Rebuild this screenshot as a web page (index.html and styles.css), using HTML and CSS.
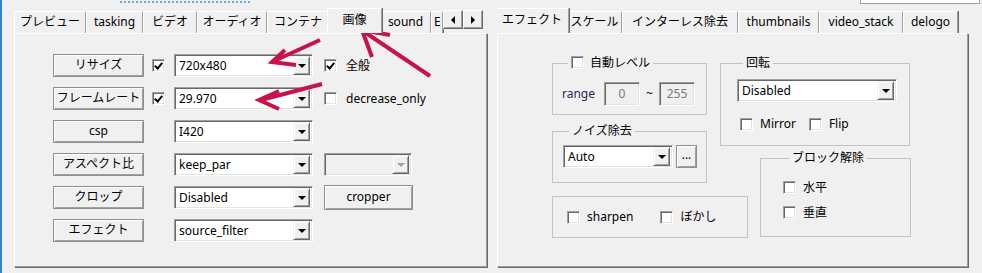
FILE: index.html
```html
<!DOCTYPE html>
<html>
<head>
    <title>画像設定</title>
    <link rel="stylesheet" href="styles.css">
</head>
<body>

<div class="win-edge"></div>
<div class="top-strip"></div>
<div class="top-field"></div>

<div class="screen">
    <div class="tabctl tabctl-left">
        <div class="tabs">
            <span class="tab w-prev">プレビュー</span>
            <span class="tab w-task">tasking</span>
            <span class="tab w-video">ビデオ</span>
            <span class="tab w-audio">オーディオ</span>
            <span class="tab w-cont">コンテナ</span>
            <span class="tab sel w-img">画像</span>
            <span class="tab w-sound">sound</span>
            <span class="tab w-enc">E</span>
            <span class="tab-scroll">
                <span class="scroll-btn"><i class="tri-left"></i></span>
                <span class="scroll-btn"><i class="tri-right"></i></span>
            </span>
        </div>
        <div class="panel panel-left">
            <div class="row">
                <span class="btn">リサイズ</span>
                <span class="chk on"></span>
                <span class="combo"><span class="combo-text">720x480</span><span class="drop"><i class="tri-down"></i></span></span>
                <span class="chk on"></span><span class="chk-label">全般</span>
            </div>
            <div class="row">
                <span class="btn">フレームレート</span>
                <span class="chk on"></span>
                <span class="combo"><span class="combo-text">29.970</span><span class="drop"><i class="tri-down"></i></span></span>
                <span class="chk"></span><span class="chk-label">decrease_only</span>
            </div>
            <div class="row">
                <span class="btn">csp</span>
                <span class="chk-space"></span>
                <span class="combo"><span class="combo-text">I420</span><span class="drop"><i class="tri-down"></i></span></span>
            </div>
            <div class="row">
                <span class="btn">アスペクト比</span>
                <span class="chk-space"></span>
                <span class="combo"><span class="combo-text">keep_par</span><span class="drop"><i class="tri-down"></i></span></span>
                <span class="combo combo-off"><span class="combo-text"></span><span class="drop"><i class="tri-down"></i></span></span>
            </div>
            <div class="row">
                <span class="btn">クロップ</span>
                <span class="chk-space"></span>
                <span class="combo"><span class="combo-text">Disabled</span><span class="drop"><i class="tri-down"></i></span></span>
                <span class="btn btn-crop">cropper</span>
            </div>
            <div class="row">
                <span class="btn">エフェクト</span>
                <span class="chk-space"></span>
                <span class="combo"><span class="combo-text">source_filter</span><span class="drop"><i class="tri-down"></i></span></span>
            </div>
        </div>
    </div>

    <div class="tabctl tabctl-right">
        <div class="tabs">
            <span class="tab sel w-eff">エフェクト</span>
            <span class="tab w-scale">スケール</span>
            <span class="tab w-deint">インターレス除去</span>
            <span class="tab w-thumb">thumbnails</span>
            <span class="tab w-stack">video_stack</span>
            <span class="tab w-delogo">delogo</span>
        </div>
        <div class="panel panel-right">
            <div class="col col-a">
                <fieldset class="group g-level">
                    <legend><span class="chk"></span><span class="chk-label">自動レベル</span></legend>
                    <div class="range-row">
                        <span class="range-label">range</span>
                        <span class="num">0</span>
                        <span class="tilde">~</span>
                        <span class="num">255</span>
                    </div>
                </fieldset>
                <fieldset class="group g-noise">
                    <legend>ノイズ除去</legend>
                    <div class="noise-row">
                        <span class="combo combo-noise"><span class="combo-text">Auto</span><span class="drop"><i class="tri-down"></i></span></span>
                        <span class="btn btn-dots">...</span>
                    </div>
                </fieldset>
                <div class="group g-sharp">
                    <span class="chk"></span><span class="chk-label">sharpen</span>
                    <span class="chk chk-gap"></span><span class="chk-label">ぼかし</span>
                </div>
            </div>
            <div class="col col-b">
                <fieldset class="group g-rot">
                    <legend>回転</legend>
                    <span class="combo combo-rot"><span class="combo-text">Disabled</span><span class="drop"><i class="tri-down"></i></span></span>
                    <div class="rot-row">
                        <span class="chk"></span><span class="chk-label">Mirror</span>
                        <span class="chk chk-flip"></span><span class="chk-label">Flip</span>
                    </div>
                </fieldset>
                <fieldset class="group g-block">
                    <legend>ブロック解除</legend>
                    <div class="block-row"><span class="chk"></span><span class="chk-label">水平</span></div>
                    <div class="block-row"><span class="chk"></span><span class="chk-label">垂直</span></div>
                </fieldset>
            </div>
        </div>
    </div>
</div>

<!-- red annotation arrows drawn over the dialog -->
<svg class="arrows" width="982" height="273" viewBox="0 0 982 273">
    <g fill="none" stroke="#c8124a" stroke-width="4">
        <path d="M320 40 L274 61"/>
        <path d="M285 50 L272 62 L296 65"/>
        <path d="M430 76 L363 31"/>
        <path d="M372 57 L362 30 L390 35"/>
        <path d="M322 84 L261 100"/>
        <path d="M279 91 L259 100 L279 109"/>
    </g>
</svg>

</body>
</html>
```

FILE: styles.css
```css
* {
    box-sizing: border-box;
}
body {
    margin: 0;
    width: 982px;
    height: 273px;
    overflow: hidden;
    position: relative;
    background-color: #f0f0f0;
    font: 12px/16px "Noto Sans", "Noto Sans CJK JP", sans-serif;
    color: #000;
}
.win-edge {
    position: absolute;
    left: 0;
    top: 0;
    width: 2px;
    height: 273px;
    background-color: #2b88d8;
}
.top-strip {
    position: absolute;
    left: 120px;
    top: 0;
    width: 130px;
    height: 3px;
    border-bottom: 2px dotted #6fa8dc;
}
.top-field {
    position: absolute;
    left: 860px;
    top: -2px;
    width: 120px;
    height: 6px;
    background-color: #fff;
    border: 1px solid #a0a0a0;
}
.screen {
    display: flex;
    gap: 10px;
    padding: 8px 0 0 14px;
}

/* tab controls */
.tabctl-left {
    width: 473px;
}
.tabctl-right {
    width: 471px;
}
.tabs {
    display: flex;
    align-items: flex-end;
    height: 25px;
    position: relative;
    overflow: hidden;
}
.tab {
    height: 22px;
    flex: none;
    text-align: center;
    line-height: 20px;
    border-top: 1px solid #fff;
    border-left: 1px solid #fff;
    border-right: 1px solid #a0a0a0;
    box-shadow: 1px 0 0 #696969;
    white-space: nowrap;
    overflow: hidden;
}
.tab.sel {
    height: 26px;
    margin: 0 -2px -1px;
    line-height: 22px;
    position: relative;
    z-index: 1;
    background-color: #f0f0f0;
}
.w-prev { width: 72px; }
.w-task { width: 57px; }
.w-video { width: 54px; }
.w-audio { width: 70px; }
.w-cont { width: 62px; }
.w-img { width: 55px; padding-bottom: 3px; }
.w-sound { width: 51px; }
.w-enc { width: 12px; text-align: left; padding-left: 2px; }
.w-eff { width: 74px; padding-bottom: 3px; }
.w-scale { width: 55px; }
.w-deint { width: 116px; }
.w-thumb { width: 81px; }
.w-stack { width: 84px; }
.w-delogo { width: 55px; }

.tab-scroll {
    position: absolute;
    left: 429px;
    top: 2px;
    display: flex;
    z-index: 2;
}
.scroll-btn {
    width: 20px;
    height: 19px;
    background-color: #f0f0f0;
    border: 1px solid;
    border-color: #fff #696969 #696969 #fff;
    box-shadow: inset -1px -1px 0 #a0a0a0;
    display: flex;
    align-items: center;
    justify-content: center;
}
.tri-left {
    border-style: solid;
    border-width: 4px 4px 4px 0;
    border-color: transparent #000 transparent transparent;
}
.tri-right {
    border-style: solid;
    border-width: 4px 0 4px 4px;
    border-color: transparent transparent transparent #000;
}
.panel {
    height: 234px;
    border: 1px solid;
    border-color: #fff #a0a0a0 #a0a0a0 #fff;
    box-shadow: 1px 1px 0 #696969;
}

/* left panel rows */
.panel-left {
    padding: 20px 0 0 38px;
    display: flex;
    flex-direction: column;
    gap: 10px;
}
.row {
    display: flex;
    align-items: center;
    height: 23px;
}
.btn {
    width: 91px;
    height: 23px;
    flex: none;
    text-align: center;
    line-height: 20px;
    background-color: #f0f0f0;
    border: 1px solid #8f8f8f;
    box-shadow: inset 1px 1px 0 #fff, inset -1px -1px 0 #a0a0a0;
    margin-right: 8px;
}
.btn-crop {
    width: 89px;
    height: 25px;
    margin-left: 11px;
    line-height: 22px;
}
.chk {
    width: 13px;
    height: 13px;
    flex: none;
    display: inline-block;
    background-color: #fff;
    border: 1px solid;
    border-color: #a0a0a0 #fff #fff #a0a0a0;
    box-shadow: inset 1px 1px 0 #696969, inset -1px -1px 0 #e3e3e3;
    position: relative;
    vertical-align: middle;
}
.chk.on::after {
    content: "";
    position: absolute;
    left: 3px;
    top: 1px;
    width: 3px;
    height: 6px;
    border: solid #000;
    border-width: 0 2px 2px 0;
    transform: rotate(40deg);
}
.chk-space {
    width: 13px;
    flex: none;
    margin-right: 9px;
}
.row .chk {
    margin-right: 9px;
}
.row .combo + .chk {
    margin-left: 11px;
    margin-right: 9px;
}
.chk-label {
    white-space: nowrap;
}
.combo {
    width: 139px;
    height: 23px;
    flex: none;
    display: flex;
    align-items: center;
    background-color: #fff;
    border: 1px solid;
    border-color: #a0a0a0 #fff #fff #a0a0a0;
    box-shadow: inset 1px 1px 0 #696969, inset -1px -1px 0 #e3e3e3;
    padding: 2px;
}
.combo-text {
    flex: 1;
    padding-left: 2px;
    white-space: nowrap;
    overflow: hidden;
}
.drop {
    width: 17px;
    height: 19px;
    flex: none;
    background-color: #f0f0f0;
    border: 1px solid;
    border-color: #f0f0f0 #696969 #696969 #f0f0f0;
    box-shadow: inset 1px 1px 0 #fff, inset -1px -1px 0 #a0a0a0;
    display: flex;
    align-items: center;
    justify-content: center;
}
.tri-down {
    border-style: solid;
    border-width: 4px 4px 0 4px;
    border-color: #000 transparent transparent transparent;
}
.combo-off {
    width: 88px;
    margin-left: 11px;
    background-color: #f0f0f0;
}
.combo-off .tri-down {
    border-top-color: #a0a0a0;
}

/* right panel groups */
.panel-right {
    display: flex;
    padding: 21px 0 0 54px;
}
.col {
    display: flex;
    flex-direction: column;
}
.col-a {
    width: 155px;
}
.col-b {
    margin-left: 13px;
    width: 190px;
}
.group {
    margin: 0;
    padding: 0;
    border: 1px solid #c3c3c3;
    min-width: 0;
}
.group legend {
    margin-left: 6px;
    padding: 0 3px;
    line-height: 16px;
    white-space: nowrap;
}
.group legend .chk {
    margin-right: 6px;
    margin-top: -2px;
}
.g-level {
    height: 60px;
    padding: 11px 0 0 9px;
}
.range-row {
    display: flex;
    align-items: center;
}
.range-label {
    color: #1e2a5a;
    width: 42px;
}
.num {
    width: 36px;
    height: 24px;
    text-align: center;
    line-height: 22px;
    color: #7a7a7a;
    border: 1px solid;
    border-color: #a0a0a0 #fff #fff #a0a0a0;
    box-shadow: inset 1px 1px 0 #696969, inset -1px -1px 0 #e3e3e3;
}
.tilde {
    width: 19px;
    text-align: center;
}
.g-noise {
    height: 60px;
    margin-top: 8px;
    padding: 6px 0 0 10px;
}
.noise-row {
    display: flex;
}
.combo-noise {
    width: 110px;
}
.btn-dots {
    width: 21px;
    margin: 0 0 0 3px;
    line-height: 18px;
}
.g-sharp {
    width: 196px;
    height: 42px;
    margin-top: 13px;
    display: flex;
    align-items: center;
    padding-left: 14px;
}
.g-sharp .chk,
.rot-row .chk,
.block-row .chk {
    margin-right: 7px;
}
.g-sharp .chk-gap {
    margin-left: 27px;
}
.g-rot {
    height: 91px;
    padding: 8px 0 0 16px;
}
.combo-rot {
    width: 160px;
}
.rot-row {
    display: flex;
    align-items: center;
    margin: 14px 0 0 3px;
}
.rot-row .chk-flip {
    margin-left: 13px;
}
.g-block {
    width: 151px;
    height: 87px;
    margin: 4px 0 0 40px;
    padding: 15px 0 0 22px;
}
.block-row {
    display: flex;
    align-items: center;
    height: 13px;
    margin-bottom: 12px;
}
.arrows {
    position: absolute;
    left: 0;
    top: 0;
    pointer-events: none;
}
```
